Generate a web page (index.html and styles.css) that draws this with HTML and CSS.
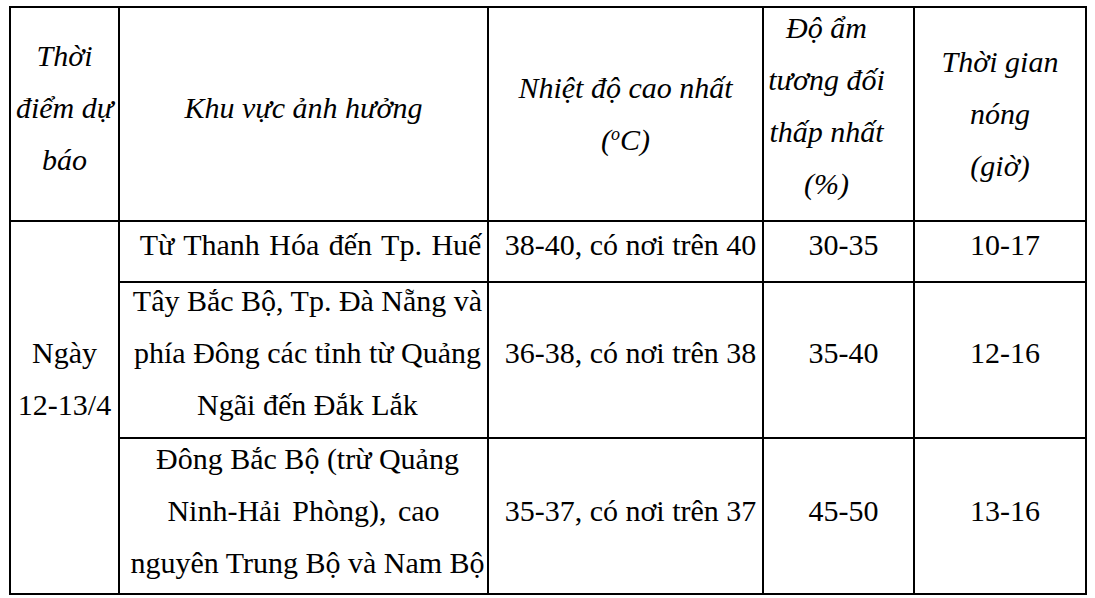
FILE: index.html
```html
<!DOCTYPE html>
<html lang="vi">
<head>
<meta charset="utf-8">
<title>Dự báo nắng nóng</title>
<link rel="stylesheet" href="styles.css">
</head>
<body>
<table class="forecast">
  <colgroup>
    <col class="c1"><col class="c2"><col class="c3"><col class="c4"><col class="c5">
  </colgroup>
  <thead>
    <tr class="head">
      <th><div class="in up6">Thời<br>điểm dự<br>báo</div></th>
      <th><div class="in up6">Khu vực ảnh hưởng</div></th>
      <th><div class="in">Nhiệt độ cao nhất<br>(<sup>o</sup>C)</div></th>
      <th class="narrow"><div class="in up8">Độ ẩm<br>tương đối<br>thấp nhất<br>(%)</div></th>
      <th><div class="in">Thời gian<br>nóng<br>(giờ)</div></th>
    </tr>
  </thead>
  <tbody>
    <tr class="r1">
      <td rowspan="3" class="date"><div class="in">Ngày<br>12-13/4</div></td>
      <td class="area area-wide"><div class="in up7 wide">Từ Thanh Hóa đến Tp. Huế</div></td>
      <td class="num"><div class="in up7">38-40, có nơi trên 40</div></td>
      <td class="num"><div class="in up7">30-35</div></td>
      <td class="num"><div class="in up7">10-17</div></td>
    </tr>
    <tr class="r2">
      <td class="area"><div class="in up7">Tây Bắc Bộ, Tp. Đà Nẵng và<br>phía Đông các tỉnh từ Quảng<br>Ngãi đến Đắk Lắk</div></td>
      <td class="num"><div class="in up7">36-38, có nơi trên 38</div></td>
      <td class="num"><div class="in up7">35-40</div></td>
      <td class="num"><div class="in up7">12-16</div></td>
    </tr>
    <tr class="r3">
      <td class="area"><div class="in up5">Đông Bắc Bộ (trừ Quảng<br><span class="spread">Ninh-Hải Phòng), cao</span><br>nguyên Trung Bộ và Nam Bộ</div></td>
      <td class="num"><div class="in up5">35-37, có nơi trên 37</div></td>
      <td class="num"><div class="in up5">45-50</div></td>
      <td class="num"><div class="in up5">13-16</div></td>
    </tr>
  </tbody>
</table>
</body>
</html>
```

FILE: styles.css
```css
html, body {
  margin: 0;
  padding: 0;
  background: #ffffff;
}

body {
  padding: 6px 0 0 9px;
  font-family: "Times New Roman", "Liberation Serif", "DejaVu Serif", serif;
  font-size: 30px;
  color: #000000;
}

.forecast {
  border-collapse: collapse;
  table-layout: fixed;
  width: 1078px;
}

.c1 { width: 109px; }
.c2 { width: 369px; }
.c3 { width: 275px; }
.c4 { width: 151px; }
.c5 { width: 172px; }

.forecast th,
.forecast td {
  box-sizing: border-box;
  border: 2px solid #000000;
  padding: 0;
  text-align: center;
  vertical-align: middle;
  line-height: 52px;
  white-space: nowrap;
  overflow: visible;
}

.forecast th {
  font-style: italic;
  font-weight: normal;
}

.head th { height: 214px; }
.r1 td { height: 61px; }
.r2 td { height: 156px; }
.r3 td { height: 156px; }

.in { margin: 0; }
.up5 { margin-top: -10px; }
.up6 { margin-top: -12px; }
.up7 { margin-top: -14px; }
.up8 { margin-top: -16px; }

.wide { word-spacing: 2px; }
.spread { word-spacing: 4px; margin-left: -8px; }

.narrow { padding-right: 24px !important; }

.area { padding-left: 8px !important; }
.area-wide { padding-left: 14px !important; }
.num { padding-left: 10px !important; }

.date { padding-bottom: 52px !important; }
.date .in { margin-top: -6px; }

sup {
  font-size: 0.6em;
  line-height: 0;
  vertical-align: 0.55em;
}
```
